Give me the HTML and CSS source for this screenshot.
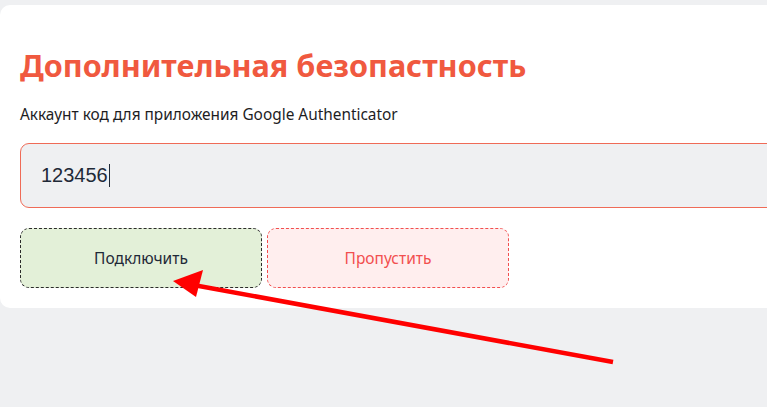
FILE: index.html
```html
<!DOCTYPE html>
<html lang="ru">
<head>
<meta charset="utf-8">
<link rel="stylesheet" href="styles.css">
</head>
<body>
<div class="page">
  <div class="card">
    <h1 class="title">Дополнительная безопастность</h1>
    <p class="label">Аккаунт код для приложения Google Authenticator</p>
    <div class="input"><span class="value">123456</span><span class="caret"></span></div>
    <div class="actions">
      <button class="btn btn-connect">Подключить</button>
      <button class="btn btn-skip">Пропустить</button>
    </div>
  </div>
  <svg class="arrow" width="767" height="407" viewBox="0 0 767 407">
    <line x1="613" y1="362" x2="188" y2="284" stroke="#ff0000" stroke-width="4.5"/>
    <polygon points="173,281 203,270 196,297" fill="#ff0000"/>
  </svg>
</div>
</body>
</html>
```

FILE: styles.css
```css
html, body {
  margin: 0;
  padding: 0;
  background: #eff0f2;
  width: 767px;
  height: 407px;
  overflow: hidden;
}
.page {
  position: relative;
  width: 767px;
  height: 407px;
  padding-top: 5px;
  box-sizing: border-box;
}
.card {
  background: #ffffff;
  border-radius: 10px 0 0 10px;
  width: 800px;
  height: 303px;
  box-sizing: border-box;
  padding: 41px 0 0 20px;
  font-family: "Noto Sans", "Open Sans", sans-serif;
}
.title {
  margin: 0;
  font-size: 30.6px;
  font-weight: 700;
  line-height: 38px;
  color: #f0593f;
  letter-spacing: 0;
}
.label {
  margin: 21px 0 0;
  font-size: 15.4px;
  line-height: 20px;
  color: #1d1d1f;
}
.input {
  margin-top: 18px;
  height: 65px;
  box-sizing: border-box;
  border: 1px solid #ef6b57;
  border-radius: 9px;
  background: #eff0f2;
  display: flex;
  align-items: center;
  padding-left: 20px;
  font-family: "Liberation Sans", Arial, sans-serif;
  font-size: 20px;
  color: #1f2937;
}
.caret {
  display: inline-block;
  width: 1px;
  height: 23px;
  background: #1f2937;
  margin-left: 1px;
}
.actions {
  display: flex;
  gap: 5px;
  margin-top: 20px;
}
.btn {
  width: 242px;
  height: 60px;
  border-radius: 9px;
  font-family: "Noto Sans", "Open Sans", sans-serif;
  font-size: 15.5px;
  cursor: pointer;
}
.btn-connect {
  background: #e3f0d8;
  border: 1px dashed #2b2b2b;
  color: #1f2937;
}
.btn-skip {
  background: #ffeeee;
  border: 1px dashed #f24f4f;
  color: #f24f4f;
}
.arrow {
  position: absolute;
  left: 0;
  top: 0;
  pointer-events: none;
}
```
